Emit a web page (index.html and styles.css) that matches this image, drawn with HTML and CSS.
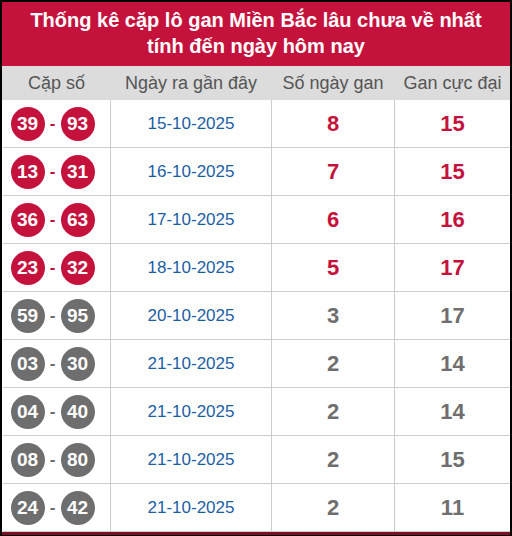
FILE: index.html
```html
<!DOCTYPE html>
<html lang="vi">
<head>
<meta charset="utf-8">
<link rel="stylesheet" href="styles.css">
</head>
<body>
<div class="frame">
  <div class="title">Thống kê cặp lô gan Miền Bắc lâu chưa về nhất tính đến ngày hôm nay</div>
  <table class="grid">
    <colgroup><col class="c1"><col class="c2"><col class="c3"><col class="c4"></colgroup>
    <thead>
      <tr><th>Cặp số</th><th>Ngày ra gần đây</th><th>Số ngày gan</th><th>Gan cực đại</th></tr>
    </thead>
    <tbody>
      <tr class="hot"><td><span class="ball">39</span><span class="dash">-</span><span class="ball">93</span></td><td class="date">15-10-2025</td><td class="num">8</td><td class="num">15</td></tr>
      <tr class="hot"><td><span class="ball">13</span><span class="dash">-</span><span class="ball">31</span></td><td class="date">16-10-2025</td><td class="num">7</td><td class="num">15</td></tr>
      <tr class="hot"><td><span class="ball">36</span><span class="dash">-</span><span class="ball">63</span></td><td class="date">17-10-2025</td><td class="num">6</td><td class="num">16</td></tr>
      <tr class="hot"><td><span class="ball">23</span><span class="dash">-</span><span class="ball">32</span></td><td class="date">18-10-2025</td><td class="num">5</td><td class="num">17</td></tr>
      <tr class="cold"><td><span class="ball">59</span><span class="dash">-</span><span class="ball">95</span></td><td class="date">20-10-2025</td><td class="num">3</td><td class="num">17</td></tr>
      <tr class="cold"><td><span class="ball">03</span><span class="dash">-</span><span class="ball">30</span></td><td class="date">21-10-2025</td><td class="num">2</td><td class="num">14</td></tr>
      <tr class="cold"><td><span class="ball">04</span><span class="dash">-</span><span class="ball">40</span></td><td class="date">21-10-2025</td><td class="num">2</td><td class="num">14</td></tr>
      <tr class="cold"><td><span class="ball">08</span><span class="dash">-</span><span class="ball">80</span></td><td class="date">21-10-2025</td><td class="num">2</td><td class="num">15</td></tr>
      <tr class="cold"><td><span class="ball">24</span><span class="dash">-</span><span class="ball">42</span></td><td class="date">21-10-2025</td><td class="num">2</td><td class="num">11</td></tr>
    </tbody>
  </table>
</div>
</body>
</html>
```

FILE: styles.css
```css
html, body {
  margin: 0;
  padding: 0;
  background: #000;
  height: 536px;
  overflow: hidden;
}
body {
  padding: 2px 2px 0 2px;
  box-sizing: border-box;
  font-family: "Liberation Sans", Arial, sans-serif;
}
.frame {
  background: #fff;
  border-bottom: 3px solid #7d0f25;
}
.title {
  background: #c5123d;
  color: #fff;
  font-weight: bold;
  font-size: 20px;
  line-height: 26px;
  text-align: center;
  padding: 5px 16px 6px;
  height: 53px;
}
.grid {
  width: 100%;
  border-collapse: collapse;
  table-layout: fixed;
}
.c1 { width: 108px; }
.c2 { width: 161px; }
.c3 { width: 123px; }
.c4 { width: auto; }
.grid th {
  background: #dcdcdc;
  color: #555;
  font-weight: normal;
  font-size: 18px;
  height: 34px;
  padding: 0;
  text-align: center;
  border-left: 1px solid #dcdcdc;
}
.grid td {
  height: 47px;
  padding: 0;
  text-align: center;
  border: 1px solid #cccccc;
  border-top: none;
}
.grid td:first-child { border-left: none; }
.grid td:last-child { border-right: none; }
.grid tbody td:first-child {
  text-align: left;
  padding-left: 8px;
  white-space: nowrap;
}
.ball {
  display: inline-block;
  width: 34px;
  height: 34px;
  border-radius: 50%;
  color: #fff;
  font-weight: bold;
  font-size: 19px;
  line-height: 34px;
  text-align: center;
  vertical-align: middle;
}
.dash {
  display: inline-block;
  width: 16px;
  text-align: center;
  font-weight: bold;
  font-size: 17px;
  vertical-align: middle;
}
.hot .ball { background: #c5123d; }
.hot .dash { color: #c5123d; }
.cold .ball { background: #6e6e6e; }
.cold .dash { color: #6e6e6e; }
.date {
  color: #1b5ea6;
  font-size: 17px;
}
.num {
  font-weight: bold;
  font-size: 22px;
}
.hot .num { color: #c5123d; }
.cold .num { color: #6e6e6e; }
```
